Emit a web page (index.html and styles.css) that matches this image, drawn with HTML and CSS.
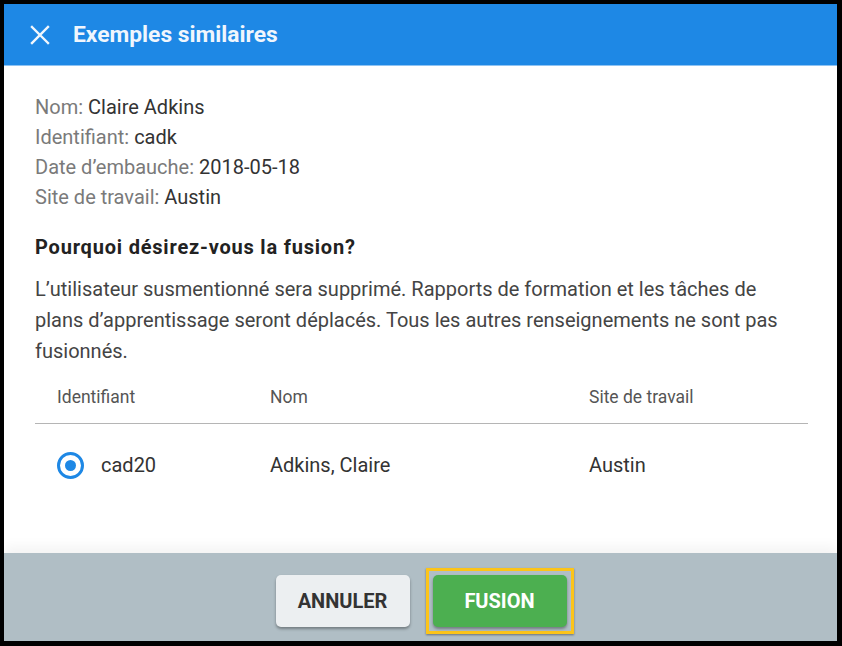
FILE: index.html
```html
<!DOCTYPE html>
<html lang="fr">
<head>
  <meta charset="UTF-8" />
  <title>Exemples similaires</title>
  <link rel="stylesheet" href="styles.css">
</head>
<body>
  <div class="dialog">
    <header class="dialog-header">
      <svg class="close-icon" width="20" height="20" viewBox="0 0 20 20">
        <path d="M2 2 L18 18 M18 2 L2 18" stroke="#f2f7fd" stroke-width="2.4" stroke-linecap="square" fill="none" />
      </svg>
      <h1>Exemples similaires</h1>
    </header>

    <main class="dialog-body">
      <div class="details">
        <div><span class="label">Nom:</span> Claire Adkins</div>
        <div><span class="label">Identifiant:</span> cadk</div>
        <div><span class="label">Date d’embauche:</span> 2018-05-18</div>
        <div><span class="label">Site de travail:</span> Austin</div>
      </div>

      <h2>Pourquoi désirez-vous la fusion?</h2>
      <p>L’utilisateur susmentionné sera supprimé. Rapports de formation et les tâches de plans d’apprentissage seront déplacés. Tous les autres renseignements ne sont pas fusionnés.</p>

      <div class="table">
        <div class="row head">
          <div class="cell">Identifiant</div>
          <div class="cell">Nom</div>
          <div class="cell">Site de travail</div>
        </div>
        <div class="row">
          <div class="cell"><span class="radio"></span>cad20</div>
          <div class="cell">Adkins, Claire</div>
          <div class="cell">Austin</div>
        </div>
      </div>
    </main>

    <footer class="dialog-footer">
      <button class="btn btn-cancel">Annuler</button>
      <span class="focus-frame">
        <button class="btn btn-merge">Fusion</button>
      </span>
    </footer>
  </div>
</body>
</html>
```

FILE: styles.css
```css
html, body {
  margin: 0;
  padding: 0;
  background: #000;
  font-family: Roboto, "Noto Sans", sans-serif;
}

.dialog {
  margin: 4px 5px 5px 4px;
  height: 637px;
  background: #fff;
  display: flex;
  flex-direction: column;
  overflow: hidden;
}

.dialog-header {
  height: 61px;
  flex: none;
  background: #1e88e5;
  border-bottom: 1px solid #8ec3f3;
  display: flex;
  align-items: center;
  padding-left: 26px;
}

.close-icon {
  flex: none;
  margin-right: 23px;
}

.dialog-header h1 {
  margin: 0;
  font-size: 22.8px;
  font-weight: 700;
  color: #f0f6fd;
}

.dialog-body {
  flex: 1;
  padding: 26px 29px 0 31px;
  font-size: 20px;
  color: #333;
}

.details {
  line-height: 30px;
}

.label {
  color: #7a7a7a;
}

.dialog-body h2 {
  margin: 20px 0 0;
  font-size: 20px;
  font-weight: 700;
  letter-spacing: 0.8px;
  line-height: 30px;
  color: #222;
}

.dialog-body p {
  margin: 12px 0 0;
  padding-right: 24px;
  line-height: 31px;
  color: #444;
}

.table {
  margin-top: 4px;
}

.row {
  display: grid;
  grid-template-columns: 213px 319px 1fr;
  align-items: center;
  height: 82px;
}

.row.head {
  height: 52px;
  border-bottom: 1px solid #b5b5b5;
  font-size: 17.5px;
  color: #555;
}

.cell {
  padding-left: 22px;
  display: flex;
  align-items: center;
}

.radio {
  width: 21px;
  height: 21px;
  border: 3px solid #1e88e5;
  border-radius: 50%;
  margin-right: 17px;
  display: flex;
  align-items: center;
  justify-content: center;
}

.radio::after {
  content: "";
  width: 11px;
  height: 11px;
  border-radius: 50%;
  background: #1e88e5;
}

.dialog-footer {
  height: 88px;
  flex: none;
  box-sizing: border-box;
  background: #b0bec5;
  box-shadow: 0 -6px 12px rgba(0, 0, 0, 0.05);
  display: flex;
  justify-content: center;
  align-items: center;
  gap: 16px;
  padding: 7px 0 0 8px;
}

.btn {
  width: 134px;
  height: 52px;
  border: none;
  border-radius: 5px;
  font-family: Roboto, "Noto Sans", sans-serif;
  font-size: 20px;
  font-weight: 700;
  text-transform: uppercase;
  box-shadow: 0 2px 3px rgba(0, 0, 0, 0.35);
}

.btn-cancel {
  background: #eceff1;
  color: #333;
}

.focus-frame {
  display: flex;
  padding: 4px;
  border: 3px solid #fcc419;
  box-shadow: 0 1px 2px rgba(0, 0, 0, 0.4);
}

.btn-merge {
  background: #4caf50;
  color: #fff;
}
```
